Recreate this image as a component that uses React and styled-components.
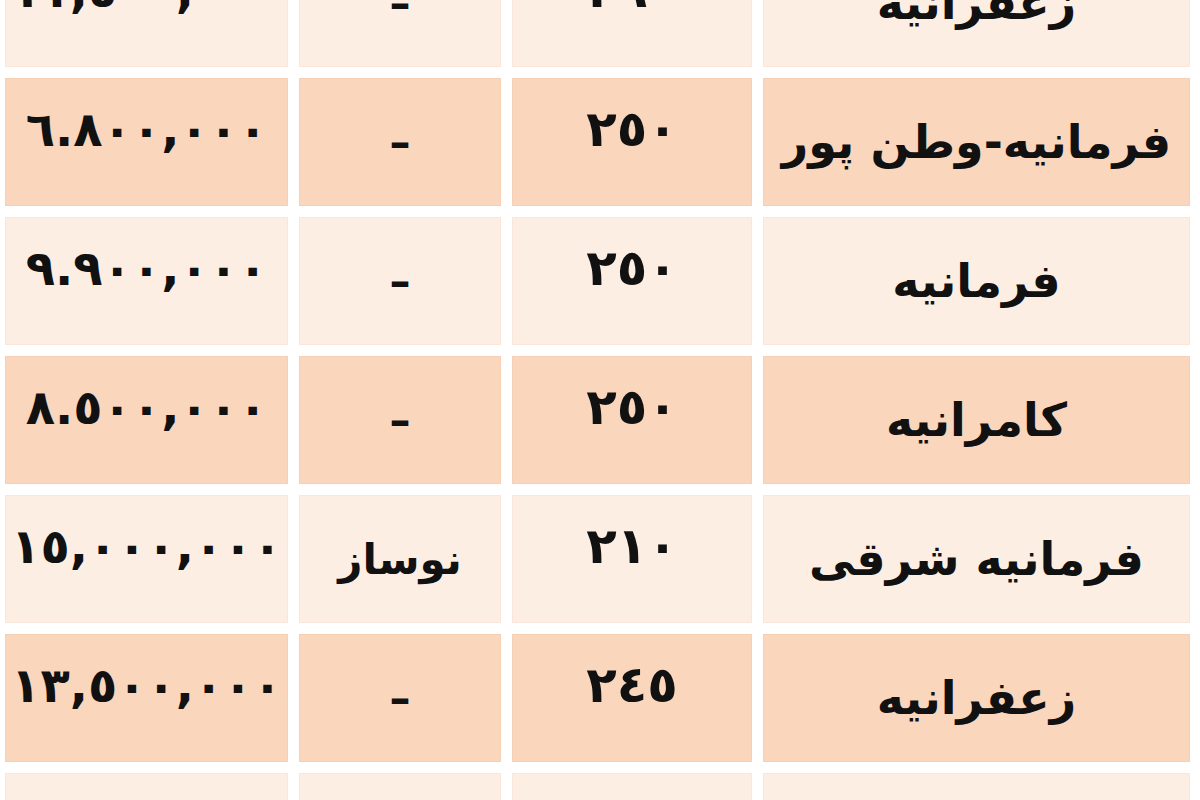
import React from "react";
import styled, { createGlobalStyle } from "styled-components";

const GlobalStyle = createGlobalStyle`
	html, body {
		margin: 0;
		padding: 0;
		background: #ffffff;
	}
	body {
		font-family: "DejaVu Sans", "Noto Sans", sans-serif;
	}
`;

const Page = styled.div`
	width: 1200px;
	height: 800px;
	overflow: hidden;
	background: #ffffff;
`;

const Table = styled.div`
	display: grid;
	grid-template-columns: 283px 202px 240px 427px;
	grid-auto-rows: 128px;
	column-gap: 11px;
	row-gap: 11px;
	padding-left: 5px;
	margin-top: -61px;
`;

const sizes = { price: "48px", area: "50px", text: "42px", place: "46px" };

const Cell = styled.div`
	display: flex;
	align-items: center;
	justify-content: center;
	box-sizing: border-box;
	padding-bottom: ${(p) => (p.$kind === "price" || p.$kind === "area" ? "26px" : "0")};
	background: ${(p) => (p.$dark ? "#fad6bd" : "#fdeee4")};
	border: 1px solid ${(p) => (p.$dark ? "#f7cfb4" : "#fbe7da")};
	color: #111111;
	font-weight: bold;
	font-size: ${(p) => sizes[p.$kind]};
	direction: rtl;
	white-space: nowrap;
`;

const rows = [
	{ price: "١١,٥٠٠,٠٠٠", state: "–", area: "٢٩٠", place: "زعفرانیه" },
	{ price: "٦.٨٠٠,٠٠٠", state: "–", area: "٢٥٠", place: "فرمانیه-وطن پور" },
	{ price: "٩.٩٠٠,٠٠٠", state: "–", area: "٢٥٠", place: "فرمانیه" },
	{ price: "٨.٥٠٠,٠٠٠", state: "–", area: "٢٥٠", place: "کامرانیه" },
	{ price: "١٥,٠٠٠,٠٠٠", state: "نوساز", area: "٢١٠", place: "فرمانیه شرقی" },
	{ price: "١٣,٥٠٠,٠٠٠", state: "–", area: "٢٤٥", place: "زعفرانیه" },
	{ price: "١٢,٠٠٠,٠٠٠", state: "–", area: "٢٦٠", place: "فرمانیه" },
];

function App() {
	return (
		<Page>
			<GlobalStyle />
			<Table>
				{rows.map((r, i) => {
					const dark = i % 2 === 1;
					return (
						<React.Fragment key={i}>
							<Cell $dark={dark} $kind="price">
								{r.price}
							</Cell>
							<Cell $dark={dark} $kind="text">
								{r.state}
							</Cell>
							<Cell $dark={dark} $kind="area">
								{r.area}
							</Cell>
							<Cell $dark={dark} $kind="place">
								{r.place}
							</Cell>
						</React.Fragment>
					);
				})}
			</Table>
		</Page>
	);
}

export default App;
